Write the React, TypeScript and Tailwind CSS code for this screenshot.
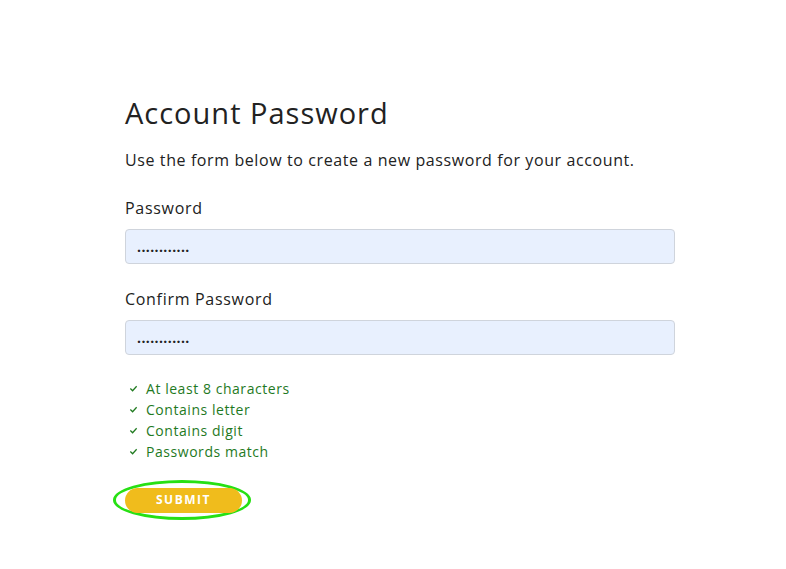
import React from "react";

function Check() {
  return (
    <svg width="9" height="9" viewBox="0 0 10 10" className="shrink-0">
      <polyline points="1.5,5 4,7.5 8.5,2.5" fill="none" stroke="#1f7a1f" strokeWidth="1.4" />
    </svg>
  );
}

export default function App() {
  const items = ["At least 8 characters", "Contains letter", "Contains digit", "Passwords match"];
  return (
    <div className="min-h-[569px] w-[786px] bg-white text-[#222]" style={{ fontFamily: '"Open Sans", sans-serif' }}>
      <div className="pl-[125px] pt-[96px] w-[675px]">
        <h1 className="text-[29px] leading-[34px] font-medium tracking-[1px]">Account Password</h1>
        <p className="mt-[18px] text-[16px] leading-[24px] tracking-[0.6px]">Use the form below to create a new password for your account.</p>
        <label className="block mt-[24px] text-[16px] leading-[24px] tracking-[0.7px]">Password</label>
        <div className="mt-[9px] h-[35px] w-[550px] rounded-[4px] border border-[#cfd4dc] bg-[#e8f0fe] flex items-center pl-[11px] text-[14px] tracking-[0.4px] font-bold">
          ............
        </div>
        <label className="block mt-[23px] text-[16px] leading-[24px] tracking-[0.7px]">Confirm Password</label>
        <div className="mt-[9px] h-[35px] w-[550px] rounded-[4px] border border-[#cfd4dc] bg-[#e8f0fe] flex items-center pl-[11px] text-[14px] tracking-[0.4px] font-bold">
          ............
        </div>
        <ul className="mt-[23px] flex flex-col text-[14px] leading-[21px] tracking-[0.55px] text-[#1f7a1f]">
          {items.map((t) => (
            <li key={t} className="flex items-center gap-[8px] pl-[4px]">
              <Check />
              <span>{t}</span>
            </li>
          ))}
        </ul>
        <div className="relative mt-[24px] inline-block">
          <span className="absolute left-[-12px] right-[-9px] top-[-6px] bottom-[-7px] rounded-[50%] border-[3.5px] border-[#27e014]" />
          <button className="relative h-[25px] w-[117px] rounded-full bg-[#f0bc1c] text-white text-[12px] font-bold tracking-[1.5px]">
            SUBMIT
          </button>
        </div>
      </div>
    </div>
  );
}
